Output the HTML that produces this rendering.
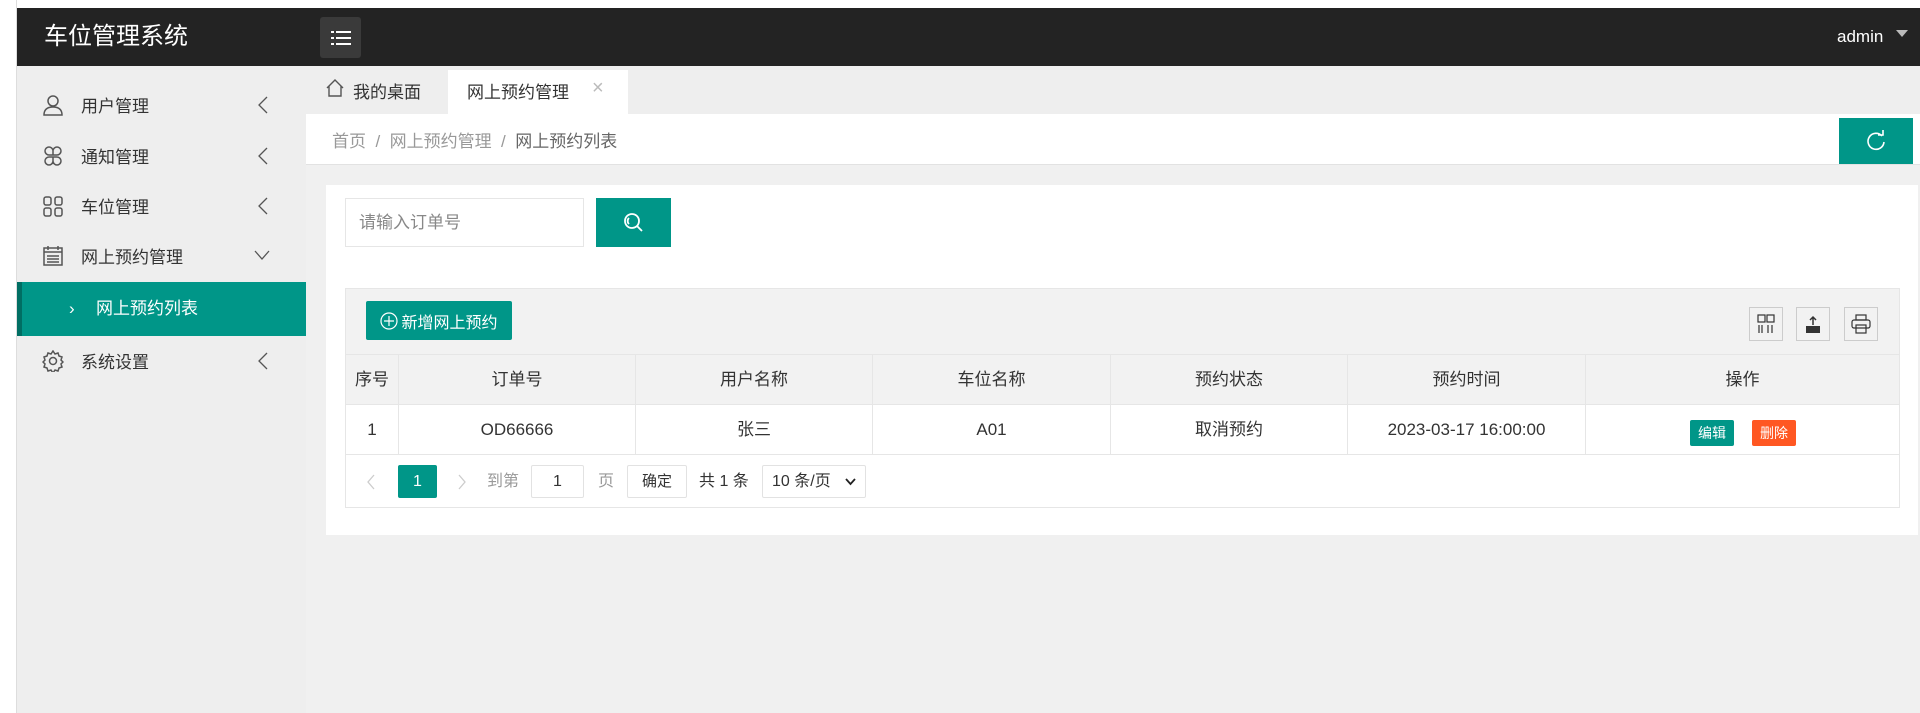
<!DOCTYPE html>
<html><head><meta charset="utf-8"><style>
*{margin:0;padding:0;box-sizing:border-box}
body{width:1920px;height:713px;overflow:hidden;background:#f0f0f0;font-family:"Liberation Sans","Noto Sans CJK SC",sans-serif;color:#333;font-size:17px;position:relative}
.a{position:absolute}
.hdr{left:17px;top:8px;width:1903px;height:58px;background:#232323}
.side{left:17px;top:66px;width:289px;height:647px;background:#eeeeee}
.mi{position:absolute;left:0;width:289px;height:40px;line-height:40px;font-size:17px;color:#333}
.mi .ic{position:absolute;left:25px;top:9px;width:22px;height:22px}
.mi .tx{position:absolute;left:64px;top:2px}
.mi .ar{position:absolute;left:240px;top:11px}
.cell{position:absolute;text-align:center;border-right:1px solid #e6e6e6;line-height:50px;height:50px}
.vc{display:flex;align-items:center;justify-content:center}
.tb{position:absolute;border:1px solid #ccc;width:34px;height:34px;top:307px;background:#f2f2f2}
.pl{position:absolute;top:465px;height:33px;line-height:33px;font-size:16px}
</style></head><body>
<div class="a" style="left:0;top:0;width:1920px;height:8px;background:#fff"></div>
<div class="a" style="left:0;top:0;width:17px;height:713px;background:#fff;border-right:1px solid #ddd"></div>
<div class="a hdr"></div>
<div class="a" style="left:44px;top:20px;color:#fff;font-size:24px;line-height:34px">车位管理系统</div>
<div class="a vc" style="left:320px;top:17px;width:41px;height:41px;background:#3a3a3a;border-radius:3px">
<svg width="20" height="16" viewBox="0 0 20 16" fill="#fff"><rect x="0" y="1" width="3" height="2"/><rect x="5" y="1" width="15" height="2"/><rect x="0" y="7" width="3" height="2"/><rect x="5" y="7" width="15" height="2"/><rect x="0" y="13" width="3" height="2"/><rect x="5" y="13" width="15" height="2"/></svg></div>
<div class="a" style="left:1837px;top:27px;color:#fff;font-size:17px">admin</div>
<div class="a" style="left:1896px;top:30px;width:0;height:0;border-left:6px solid transparent;border-right:6px solid transparent;border-top:7px solid #bbb"></div>

<div class="a side">
<div class="mi" style="top:19px"><svg class="ic" viewBox="0 0 22 22" fill="none" stroke="#555" stroke-width="1.5"><circle cx="11" cy="7" r="5"/><path d="M2 21c0-6 4-8 9-8s9 2 9 8z"/></svg><span class="tx">用户管理</span><svg class="ar" width="12" height="18" viewBox="0 0 12 18" fill="none" stroke="#555" stroke-width="1.3"><path d="M10 1L2 9l8 8"/></svg></div>
<div class="mi" style="top:70px"><svg class="ic" viewBox="0 0 22 22" fill="none" stroke="#555" stroke-width="1.5"><path d="M11 6a4 4 0 1 0-4 4h4zM11 6a4 4 0 1 1 4 4h-4zM11 16a4 4 0 1 1-4-4h4zM11 16a4 4 0 1 0 4-4h-4z"/></svg><span class="tx">通知管理</span><svg class="ar" width="12" height="18" viewBox="0 0 12 18" fill="none" stroke="#555" stroke-width="1.3"><path d="M10 1L2 9l8 8"/></svg></div>
<div class="mi" style="top:120px"><svg class="ic" viewBox="0 0 22 22" fill="none" stroke="#555" stroke-width="1.5"><rect x="2" y="2" width="7" height="8" rx="2"/><rect x="13" y="2" width="7" height="8" rx="2"/><rect x="2" y="13" width="7" height="8" rx="2"/><rect x="13" y="13" width="7" height="8" rx="2"/></svg><span class="tx">车位管理</span><svg class="ar" width="12" height="18" viewBox="0 0 12 18" fill="none" stroke="#555" stroke-width="1.3"><path d="M10 1L2 9l8 8"/></svg></div>
<div class="mi" style="top:170px"><svg class="ic" viewBox="0 0 22 22" fill="none" stroke="#555" stroke-width="1.5"><rect x="2" y="3" width="18" height="17"/><path d="M2 7h18M6 1v4M16 1v4M5 11h12M5 14h12M5 17h12"/></svg><span class="tx">网上预约管理</span><svg class="ar" style="left:237px;top:14px" width="16" height="10" viewBox="0 0 16 10" fill="none" stroke="#555" stroke-width="1.3"><path d="M1 1l7 8 7-8"/></svg></div>
<div class="a" style="left:0;top:216px;width:289px;height:54px;background:#009688;border-left:5px solid #006e63;color:#fff;line-height:54px"><span class="a" style="left:47px">&#x203A;</span><span class="a" style="left:74px">网上预约列表</span></div>
<div class="mi" style="top:275px"><svg class="ic" viewBox="0 0 22 22" fill="none" stroke="#555" stroke-width="1.5"><circle cx="11" cy="11" r="3.5"/><path d="M11 1l2 3 3-1 1 3 3 1-1 3 2 2-2 2 1 3-3 1-1 3-3-1-2 3-2-3-3 1-1-3-3-1 1-3-2-2 2-2-1-3 3-1 1-3 3 1z"/></svg><span class="tx">系统设置</span><svg class="ar" width="12" height="18" viewBox="0 0 12 18" fill="none" stroke="#555" stroke-width="1.3"><path d="M10 1L2 9l8 8"/></svg></div>
</div>

<!-- tabs -->
<div class="a" style="left:306px;top:66px;width:1614px;height:48px;background:#eeeeee"></div>
<svg class="a" style="left:325px;top:78px" width="20" height="20" viewBox="0 0 20 20" fill="none" stroke="#555" stroke-width="1.4"><path d="M2 10L10 2l8 8M4 8v10h12V8"/></svg>
<div class="a" style="left:353px;top:78px">我的桌面</div>
<div class="a" style="left:448px;top:70px;width:180px;height:44px;background:#fff"></div>
<div class="a" style="left:467px;top:78px">网上预约管理</div>
<div class="a" style="left:592px;top:77px;color:#bbb;font-size:20px">×</div>

<!-- breadcrumb -->
<div class="a" style="left:306px;top:114px;width:1614px;height:51px;background:#fff;border-bottom:1px solid #e2e2e2"></div>
<div class="a" style="left:332px;top:127px;color:#999;font-size:17px">首页 &nbsp;/&nbsp; 网上预约管理 &nbsp;/&nbsp; <span style="color:#666">网上预约列表</span></div>
<div class="a vc" style="left:1839px;top:118px;width:74px;height:46px;background:#009688">
<svg width="22" height="22" viewBox="0 0 22 22" fill="none" stroke="#fff" stroke-width="1.6"><path d="M17 6A8 8 0 1 0 19 12"/><path d="M13 5h5V0"/></svg></div>

<!-- card -->
<div class="a" style="left:326px;top:185px;width:1592px;height:350px;background:#fff"></div>
<div class="a" style="left:345px;top:198px;width:239px;height:49px;border:1px solid #e6e6e6;color:#888;line-height:47px;padding-left:13px">请输入订单号</div>
<div class="a vc" style="left:596px;top:198px;width:75px;height:49px;background:#009688">
<svg width="24" height="24" viewBox="0 0 24 24" fill="none" stroke="#fff" stroke-width="1.8"><circle cx="10" cy="10" r="7"/><path d="M15 15l5 5"/><path d="M7 7a4 4 0 0 0 0 6"/></svg></div>

<div class="a" style="left:345px;top:288px;width:1555px;height:220px;border:1px solid #e6e6e6;background:#fff"></div>
<div class="a" style="left:346px;top:289px;width:1553px;height:66px;background:#f2f2f2;border-bottom:1px solid #e6e6e6"></div>
<div class="a vc" style="left:366px;top:301px;width:146px;height:39px;background:#009688;color:#fff;border-radius:2px;font-size:16px">
<svg width="18" height="18" viewBox="0 0 18 18" fill="none" stroke="#fff" stroke-width="1.2" style="margin-right:3px"><circle cx="9" cy="9" r="8"/><path d="M9 4v10M4 9h10"/></svg>新增网上预约</div>
<div class="tb vc" style="left:1749px"><svg width="18" height="20" viewBox="0 0 18 20" fill="none" stroke="#333" stroke-width="1.2"><rect x="1" y="1" width="7" height="7"/><rect x="10" y="1" width="7" height="7"/><path d="M2 11v8M5 11v8M11 11v8M15 11v8"/></svg></div>
<div class="tb vc" style="left:1796px"><svg width="18" height="20" viewBox="0 0 18 20"><path d="M2 12h14v7H2z" fill="#333"/><path d="M9 11V3M6 6l3-3 3 3" stroke="#333" stroke-width="1.5" fill="none"/></svg></div>
<div class="tb vc" style="left:1844px"><svg width="20" height="20" viewBox="0 0 20 20" fill="none" stroke="#333" stroke-width="1.2"><rect x="5" y="1" width="10" height="5"/><rect x="1" y="6" width="18" height="8" rx="2"/><rect x="5" y="11" width="10" height="8"/></svg></div>

<!-- header row -->
<div class="a" style="left:346px;top:355px;width:1553px;height:50px;background:#f2f2f2;border-bottom:1px solid #e6e6e6"></div>
<div class="a" style="left:346px;top:405px;width:1553px;height:50px;border-bottom:1px solid #e6e6e6"></div>
<div class="cell" style="left:346px;top:355px;width:53px">序号</div>
<div class="cell" style="left:399px;top:355px;width:237px">订单号</div>
<div class="cell" style="left:636px;top:355px;width:237px">用户名称</div>
<div class="cell" style="left:873px;top:355px;width:238px">车位名称</div>
<div class="cell" style="left:1111px;top:355px;width:237px">预约状态</div>
<div class="cell" style="left:1348px;top:355px;width:238px">预约时间</div>
<div class="cell" style="left:1586px;top:355px;width:313px;border:none">操作</div>
<div class="cell" style="left:346px;top:405px;width:53px">1</div>
<div class="cell" style="left:399px;top:405px;width:237px">OD66666</div>
<div class="cell" style="left:636px;top:405px;width:237px">张三</div>
<div class="cell" style="left:873px;top:405px;width:238px">A01</div>
<div class="cell" style="left:1111px;top:405px;width:237px">取消预约</div>
<div class="cell" style="left:1348px;top:405px;width:238px">2023-03-17 16:00:00</div>
<div class="a" style="left:1690px;top:420px;width:44px;height:26px;line-height:26px;text-align:center;background:#009688;color:#fff;font-size:14px;border-radius:2px">编辑</div>
<div class="a" style="left:1752px;top:420px;width:44px;height:26px;line-height:26px;text-align:center;background:#ff5722;color:#fff;font-size:14px;border-radius:2px">删除</div>

<!-- pagination -->
<svg class="a" style="left:366px;top:474px" width="10" height="16" viewBox="0 0 10 16" fill="none" stroke="#ccc" stroke-width="1.3"><path d="M8 1L2 8l6 7"/></svg>
<div class="pl" style="left:398px;width:39px;text-align:center;background:#009688;color:#fff;border-radius:2px">1</div>
<svg class="a" style="left:457px;top:474px" width="10" height="16" viewBox="0 0 10 16" fill="none" stroke="#ccc" stroke-width="1.3"><path d="M2 1l6 7-6 7"/></svg>
<div class="pl" style="left:487px;color:#999">到第</div>
<div class="pl" style="left:531px;width:53px;text-align:center;border:1px solid #e2e2e2;border-radius:2px;line-height:31px">1</div>
<div class="pl" style="left:598px;color:#999">页</div>
<div class="pl" style="left:627px;width:60px;text-align:center;border:1px solid #e2e2e2;border-radius:2px;font-size:15px;line-height:31px">确定</div>
<div class="pl" style="left:699px">共 1 条</div>
<div class="pl" style="left:762px;width:104px;border:1px solid #e2e2e2;border-radius:2px;line-height:31px;padding-left:9px">10 条/页<svg style="position:absolute;right:9px;top:12px" width="11" height="8" viewBox="0 0 11 8" fill="none" stroke="#222" stroke-width="1.8"><path d="M1 1l4.5 5L10 1"/></svg></div>
</body></html>
